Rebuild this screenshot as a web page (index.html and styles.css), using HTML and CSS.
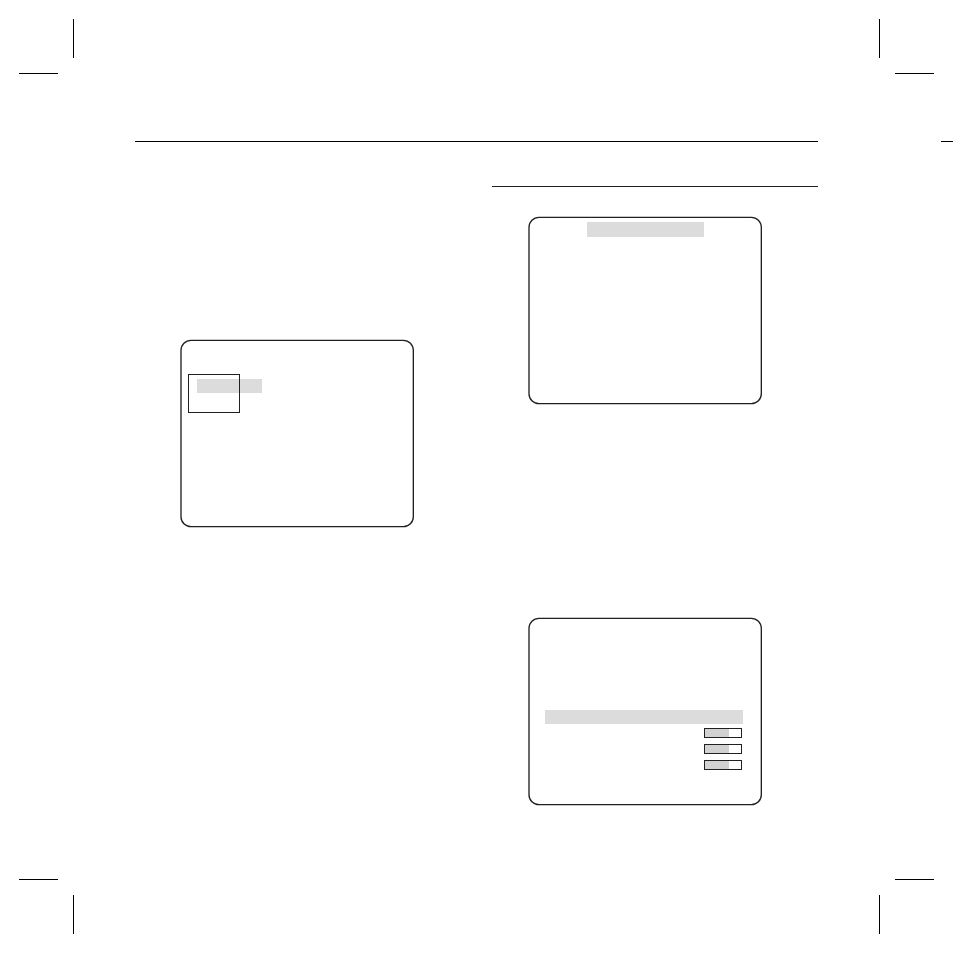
FILE: index.html
```html
<!DOCTYPE html>
<html lang="en">
<head>
    <meta charset="UTF-8">
    <meta name="viewport" content="width=device-width, initial-scale=1.0">
    <title>Camera Manual</title>
    <link rel="stylesheet" href="styles.css">
</head>
<body>

    <!-- top crop marks -->
    <div class="crop-row">
        <svg class="crop" viewBox="0 0 55 55"><path d="M54.5 0V39M0 54.5H39"/></svg>
        <svg class="crop" viewBox="0 0 55 55"><path d="M.5 0V39M16 54.5H55"/></svg>
    </div>

    <!-- page header rule, continues on the next page -->
    <header class="header">
        <div class="header-rule"></div>
        <div class="next-rule"></div>
    </header>

    <main class="columns">
        <section class="column column-left">
            <div class="screen screen-menu">
                <svg class="outline" viewBox="0 0 234 189"><rect x="1" y="1.33" width="232.33" height="186.33" rx="10"/></svg>
                <div class="area-box">
                    <div class="highlight highlight-area"></div>
                </div>
            </div>
        </section>

        <section class="column column-right">
            <div class="section-rule"></div>
            <div class="screen screen-title">
                <svg class="outline" viewBox="0 0 234 189"><rect x="1" y="1.33" width="232.33" height="186.33" rx="10"/></svg>
                <div class="highlight highlight-title"></div>
            </div>
            <div class="screen screen-levels">
                <svg class="outline" viewBox="0 0 234 189"><rect x="1" y="1.33" width="232.33" height="186.33" rx="10"/></svg>
                <div class="highlight highlight-row"></div>
                <div class="levels">
                    <div class="level"><div class="level-fill" style="width: 67%"></div></div>
                    <div class="level"><div class="level-fill" style="width: 67%"></div></div>
                    <div class="level"><div class="level-fill" style="width: 67%"></div></div>
                </div>
            </div>
        </section>
    </main>

    <!-- bottom crop marks -->
    <div class="crop-row">
        <svg class="crop" viewBox="0 0 55 55"><path d="M0 .5H39M54.5 16V55"/></svg>
        <svg class="crop" viewBox="0 0 55 55"><path d="M16 .5H55M.5 16V55"/></svg>
    </div>

</body>
</html>
```
FILE: styles.css
```css
* {
    box-sizing: border-box;
}

body {
    margin: 0;
    padding: 19px 0;
    min-height: 100vh;
    display: flex;
    flex-direction: column;
    background-color: #fff;
    font-family: "Liberation Sans", Arial, sans-serif;
}

/* crop marks */
.crop-row {
    display: flex;
    justify-content: space-between;
    padding: 0 19px;
}

.crop {
    display: block;
    width: 55px;
    height: 55px;
    fill: none;
    stroke: #000;
    stroke-width: 1;
}

/* header */
.header {
    display: flex;
    gap: 123px;
    margin-top: 67px;
    padding-left: 135px;
}

.header-rule {
    flex: 1;
    height: 1px;
    background-color: #000;
}

.next-rule {
    width: 12px;
    height: 1px;
    background-color: #000;
}

/* two columns */
.columns {
    flex: 1;
    display: grid;
    grid-template-columns: 1fr 1fr;
    gap: 31px;
    padding: 0 135px;
}

.column-left {
    padding: 197px 0 0 45px;
}

.column-right {
    padding-top: 44px;
}

.section-rule {
    height: 1px;
    background-color: #231f20;
}

/* monitor screens */
.screen {
    position: relative;
    width: 234px;
    height: 189px;
}

.outline {
    position: absolute;
    top: 0;
    left: 0;
    width: 100%;
    height: 100%;
    fill: none;
    stroke: #231f20;
    stroke-width: 1.33;
}

.screen-menu {
    padding: 35px 8px;
}

.screen-title {
    margin: 29px 0 0 36px;
    padding-top: 6px;
}

.screen-levels {
    margin: 212px 0 0 36px;
    padding: 93px 19px 0 17px;
}

.highlight {
    height: 14px;
    background-color: #dcdcdc;
}

.area-box {
    position: relative;
    width: 52px;
    height: 39px;
    padding: 5px 0 0 9px;
}

/* the frame is drawn over the highlight */
.area-box::after {
    content: "";
    position: absolute;
    inset: 0;
    border: 1px solid #231f20;
}

.highlight-area {
    width: 65px;
}

.highlight-title {
    width: 117px;
    height: 15px;
    margin: 0 auto;
}

/* level bars */
.levels {
    display: flex;
    flex-direction: column;
    align-items: flex-end;
    gap: 6px;
    padding: 4px 1px 0 0;
}

.level {
    width: 38px;
    height: 10px;
    border: 1px solid #231f20;
}

.level-fill {
    height: 100%;
    background-color: #d1d3d2;
}
```
